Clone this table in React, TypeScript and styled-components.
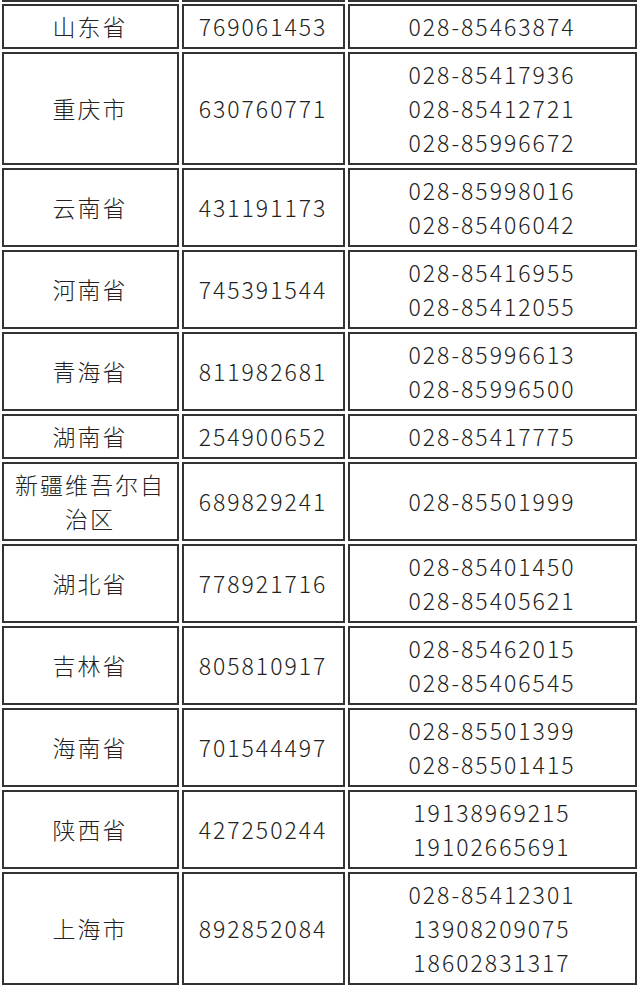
import React from "react";
import styled, { createGlobalStyle } from "styled-components";

const GlobalStyle = createGlobalStyle`
  html, body {
    margin: 0;
    padding: 0;
    background: #ffffff;
  }
  body {
    font-family: "Noto Sans CJK SC", "Noto Sans", sans-serif;
    color: #262626;
  }
`;

const Table = styled.div`
  display: flex;
  flex-direction: column;
  gap: 3px;
  padding: 0 0 4px 1.5px;
`;

const Row = styled.div`
  display: grid;
  grid-template-columns: 177px 163px 289px;
  column-gap: 3px;
`;

const Cell = styled.div`
  border: 2px solid #333333;
  padding: 3.5px 6px;
  display: flex;
  flex-direction: column;
  align-items: center;
  justify-content: center;
  text-align: center;
  font-size: 23px;
  font-weight: 300;
  line-height: 34px;
  letter-spacing: 2px;
  color: #222222;
`;

const StubRow = styled(Row)`
  margin-bottom: -1.5px;
`;

const StubCell = styled.div`
  border: 2px solid #333333;
  border-top: 0;
  height: 0;
`;

const Line = styled.span`
  display: block;
`;

type Entry = { region: string; qq: string; phones: string[] };

const data: Entry[] = [
  { region: "山东省", qq: "769061453", phones: ["028-85463874"] },
  { region: "重庆市", qq: "630760771", phones: ["028-85417936", "028-85412721", "028-85996672"] },
  { region: "云南省", qq: "431191173", phones: ["028-85998016", "028-85406042"] },
  { region: "河南省", qq: "745391544", phones: ["028-85416955", "028-85412055"] },
  { region: "青海省", qq: "811982681", phones: ["028-85996613", "028-85996500"] },
  { region: "湖南省", qq: "254900652", phones: ["028-85417775"] },
  { region: "新疆维吾尔自治区", qq: "689829241", phones: ["028-85501999"] },
  { region: "湖北省", qq: "778921716", phones: ["028-85401450", "028-85405621"] },
  { region: "吉林省", qq: "805810917", phones: ["028-85462015", "028-85406545"] },
  { region: "海南省", qq: "701544497", phones: ["028-85501399", "028-85501415"] },
  { region: "陕西省", qq: "427250244", phones: ["19138969215", "19102665691"] },
  { region: "上海市", qq: "892852084", phones: ["028-85412301", "13908209075", "18602831317"] },
];

export default function App() {
  return (
    <>
      <GlobalStyle />
      <Table>
        <StubRow>
          <StubCell />
          <StubCell />
          <StubCell />
        </StubRow>
        {data.map((d) => (
          <Row key={d.region}>
            <Cell>{d.region}</Cell>
            <Cell>{d.qq}</Cell>
            <Cell>
              {d.phones.map((p) => (
                <Line key={p}>{p}</Line>
              ))}
            </Cell>
          </Row>
        ))}
      </Table>
    </>
  );
}
